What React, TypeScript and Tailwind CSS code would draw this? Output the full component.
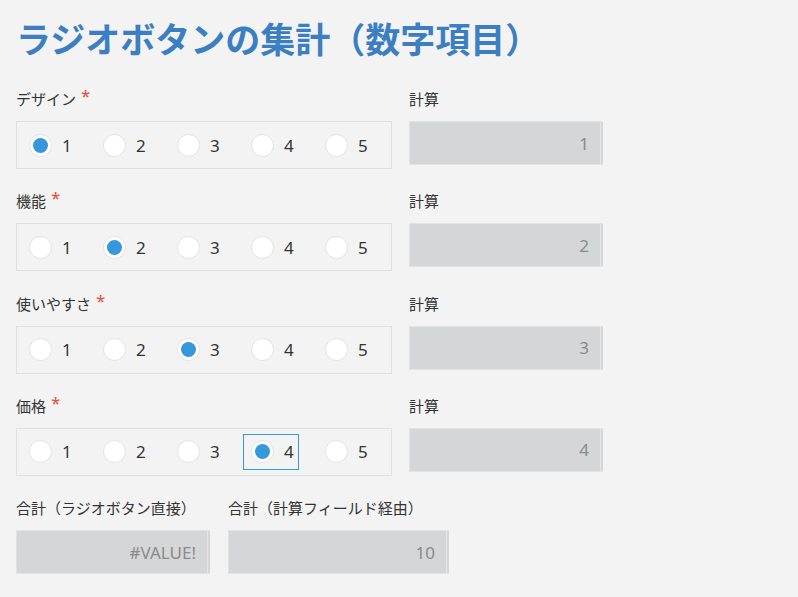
import React from "react";

type RadioRow = {
  label: string;
  selected: number;
  focused?: boolean;
};

const rows: RadioRow[] = [
  { label: "デザイン", selected: 1 },
  { label: "機能", selected: 2 },
  { label: "使いやすさ", selected: 3 },
  { label: "価格", selected: 4, focused: true },
];

function FieldLabel({ text, required }: { text: string; required?: boolean }) {
  return (
    <div className="h-[20px] text-[15px] leading-[20px] text-[#333] whitespace-nowrap">
      {text}
      {required && (
        <span className="relative -top-[3px] ml-[5px] text-[17px] text-[#e74c3c]">*</span>
      )}
    </div>
  );
}

function CalcBox({ value, width }: { value: string; width: string }) {
  return (
    <div className={`mt-[12px] flex h-[44px] ${width} border-y border-l border-[#e2e2e2] bg-[#d5d6d8]`}>
      <div className="flex flex-1 items-center justify-end pr-[11px] text-[17px] leading-none text-[#8a8a8a]">
        {value}
      </div>
      <div className="w-px bg-[#e6e6e6]" />
      <div className="w-[2px]" />
    </div>
  );
}

function RadioGroup({ selected, focused }: { selected: number; focused?: boolean }) {
  return (
    <div className="mt-[12px] flex h-[48px] w-[376px] items-center gap-[18px] border border-[#e0e0e0] pl-[4px]">
      {[1, 2, 3, 4, 5].map((n) => {
        const checked = n === selected;
        return (
          <div
            key={n}
            className={`flex h-[36px] w-[56px] items-center border pl-[7px] ${
              checked && focused ? "border-[#3498db]" : "border-transparent"
            }`}
          >
            <div className="flex h-[23px] w-[23px] items-center justify-center rounded-full border border-[#e3e3e3] bg-white">
              {checked && <div className="h-[15px] w-[15px] rounded-full bg-[#3498db]" />}
            </div>
            <span className="ml-[10px] text-[17px] leading-none text-[#333]">{n}</span>
          </div>
        );
      })}
    </div>
  );
}

export default function App() {
  return (
    <div className="min-h-screen w-full bg-[#f3f3f3] font-['Noto_Sans','Noto_Sans_CJK_JP',sans-serif]">
      <div className="px-4 pt-[20px]">
        {/* Heading */}
        <h1 className="h-[35px] whitespace-nowrap font-['Noto_Sans_CJK_JP',sans-serif] text-[35px] font-bold leading-[35px] text-[#3b7fc2]">
          ラジオボタンの集計（数字項目）
        </h1>

        <div className="mt-[34px] flex flex-col gap-[22.33px]">
          {rows.map((row) => (
            <div key={row.label} className="flex gap-[17px]">
              <div>
                <FieldLabel text={row.label} required />
                <RadioGroup selected={row.selected} focused={row.focused} />
              </div>
              <div>
                <FieldLabel text="計算" />
                <CalcBox value={String(row.selected)} width="w-[194px]" />
              </div>
            </div>
          ))}

          {/* Totals */}
          <div className="flex gap-[18px]">
            <div>
              <FieldLabel text="合計（ラジオボタン直接）" />
              <CalcBox value="#VALUE!" width="w-[194px]" />
            </div>
            <div>
              <FieldLabel text="合計（計算フィールド経由）" />
              <CalcBox value="10" width="w-[221px]" />
            </div>
          </div>
        </div>
      </div>
    </div>
  );
}
